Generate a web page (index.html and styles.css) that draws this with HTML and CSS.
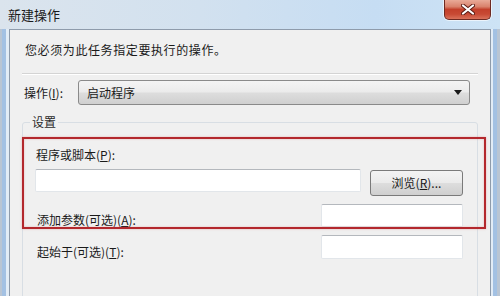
FILE: index.html
```html
<!DOCTYPE html>
<html lang="zh">
<head>
<meta charset="utf-8">
<link rel="stylesheet" href="styles.css">
</head>
<body>
<div class="window">
  <div class="titlebar">
    <span class="title">新建操作</span>
    <div class="close">
      <svg width="14" height="11" viewBox="0 0 14 11"><path d="M2 1.5 L12 9.5 M12 1.5 L2 9.5" stroke="#5a1a12" stroke-width="4" stroke-linecap="round"/><path d="M2 1.5 L12 9.5 M12 1.5 L2 9.5" stroke="#ffffff" stroke-width="2.2" stroke-linecap="round"/></svg>
    </div>
  </div>
  <div class="client">
    <p class="intro">您必须为此任务指定要执行的操作。</p>
    <div class="sep"></div>
    <div class="op-row">
      <span class="op-label">操作(<u>I</u>):</span>
      <div class="combo">
        <span>启动程序</span>
        <svg class="arrow" width="8" height="5" viewBox="0 0 8 5"><path d="M0 0 H8 L4 5 Z" fill="#1a1a1a"/></svg>
      </div>
    </div>
    <fieldset class="group">
      <legend>设置</legend>
      <div class="lbl-p">程序或脚本(<u>P</u>):</div>
      <div class="row row-p">
        <div class="input wide"></div>
        <div class="btn">浏览(<u>R</u>)...</div>
      </div>
      <div class="row row-opt">
        <span class="lbl">添加参数(可选)(<u>A</u>):</span>
        <div class="input short"></div>
      </div>
      <div class="row row-opt">
        <span class="lbl">起始于(可选)(<u>T</u>):</span>
        <div class="input short tall"></div>
      </div>
    </fieldset>
    <div class="highlight"></div>
  </div>
</div>
</body>
</html>
```
FILE: styles.css
```css
html, body {
  margin: 0;
  padding: 0;
}
body {
  width: 500px;
  height: 296px;
  overflow: hidden;
  font-family: "Noto Sans CJK SC", "Microsoft YaHei", sans-serif;
  color: #1a1a1a;
}
.window {
  width: 500px;
  height: 296px;
  display: flex;
  flex-direction: column;
  background:
    linear-gradient(to right, #b9c5d3 0 2px, #a3c1e3 2px 6px, #e2ecf6 6px 9px, transparent 9px 491px, #e2ecf6 491px 493px, #a3c1e3 493px 497px, #b9c5d3 497px),
    #cfe0f1;
  overflow: hidden;
}
.titlebar {
  height: 29px;
  flex: none;
  display: flex;
  align-items: flex-start;
  background: linear-gradient(to right, #dbe4ed 0%, #d2e1ef 40%, #c6ddf3 75%, #cde3f5 100%);
}
.title {
  font-size: 13px;
  line-height: 16px;
  margin: 7px 0 0 8px;
  color: #1a1a1a;
}
.close {
  margin-left: auto;
  margin-right: 9px;
  width: 47px;
  height: 20px;
  box-sizing: border-box;
  border: 1px solid #6e2a22;
  border-top: none;
  border-radius: 0 0 5px 5px;
  background: linear-gradient(to bottom, #e9aa98 0%, #d9826c 35%, #c3402b 50%, #c84a34 75%, #d9715a 100%);
  box-shadow: 0 0 0 1px rgba(255,255,255,0.6);
  display: flex;
  align-items: center;
  justify-content: center;
}
.client {
  flex: 1;
  margin: 0 9px;
  border: 1px solid #8e9bab;
  border-bottom: none;
  background: #f0f0f0;
  position: relative;
  display: flex;
  flex-direction: column;
  font-size: 12px;
}
.intro {
  margin: 12px 0 0 15px;
  line-height: 16px;
  letter-spacing: 0.6px;
}
.sep {
  margin: 15px 0 0 12px;
  width: 456px;
  height: 1px;
  background: #d4d4d4;
  border-bottom: 1px solid #ffffff;
}
.op-row {
  display: flex;
  align-items: center;
  margin-top: 5px;
  height: 25px;
}
.op-label {
  width: 54px;
  padding-left: 14px;
  line-height: 16px;
  margin-top: 1px;
}
.combo {
  width: 392px;
  height: 25px;
  box-sizing: border-box;
  border: 1px solid #8a8a8a;
  border-radius: 3px;
  background: linear-gradient(to bottom, #f4f4f4 0%, #ebebeb 48%, #dddddd 52%, #d0d0d0 100%);
  display: flex;
  align-items: center;
  padding: 0 7px 0 8px;
  line-height: 16px;
}
.combo .arrow {
  margin-left: auto;
}
.group {
  margin: 9px 0 0 12px;
  padding: 0 0 60px 0;
  width: 456px;
  box-sizing: border-box;
  border: 1px solid #d8dee4;
  border-radius: 3px;
  min-inline-size: 0;
}
.group legend {
  margin-left: 7px;
  padding: 0 2px;
  line-height: 16px;
  color: #2a2a2a;
}
.lbl-p {
  margin: 17px 0 0 13px;
  line-height: 16px;
}
.row {
  display: flex;
}
.row-p {
  margin: 6px 0 0 12px;
  align-items: flex-start;
}
.input {
  height: 23px;
  box-sizing: border-box;
  background: #ffffff;
  border: 1px solid #e2e6ea;
  border-top-color: #b4b8bd;
  border-radius: 2px;
}
.wide {
  width: 326px;
}
.btn {
  margin: 1px 0 0 9px;
  width: 93px;
  height: 26px;
  box-sizing: border-box;
  border: 1px solid #7a7a7a;
  border-radius: 3px;
  background: linear-gradient(to bottom, #f3f3f3 0%, #ebebeb 48%, #dddddd 52%, #cfcfcf 100%);
  display: flex;
  align-items: center;
  justify-content: center;
  line-height: 16px;
}
.row-opt {
  margin: 8px 0 0 0;
  align-items: flex-end;
}
.lbl {
  flex: 1;
  padding-left: 14px;
  line-height: 16px;
  margin-bottom: -1px;
}
.short {
  width: 142px;
  margin-right: 14px;
}
.tall {
  height: 24px;
}
.highlight {
  position: absolute;
  left: 12px;
  top: 107px;
  width: 464px;
  height: 92px;
  box-sizing: border-box;
  border: 2px solid #b3282d;
  box-shadow: 0 0 2px rgba(220, 120, 120, 0.5), inset 0 0 2px rgba(220, 120, 120, 0.5);
  pointer-events: none;
}
```
